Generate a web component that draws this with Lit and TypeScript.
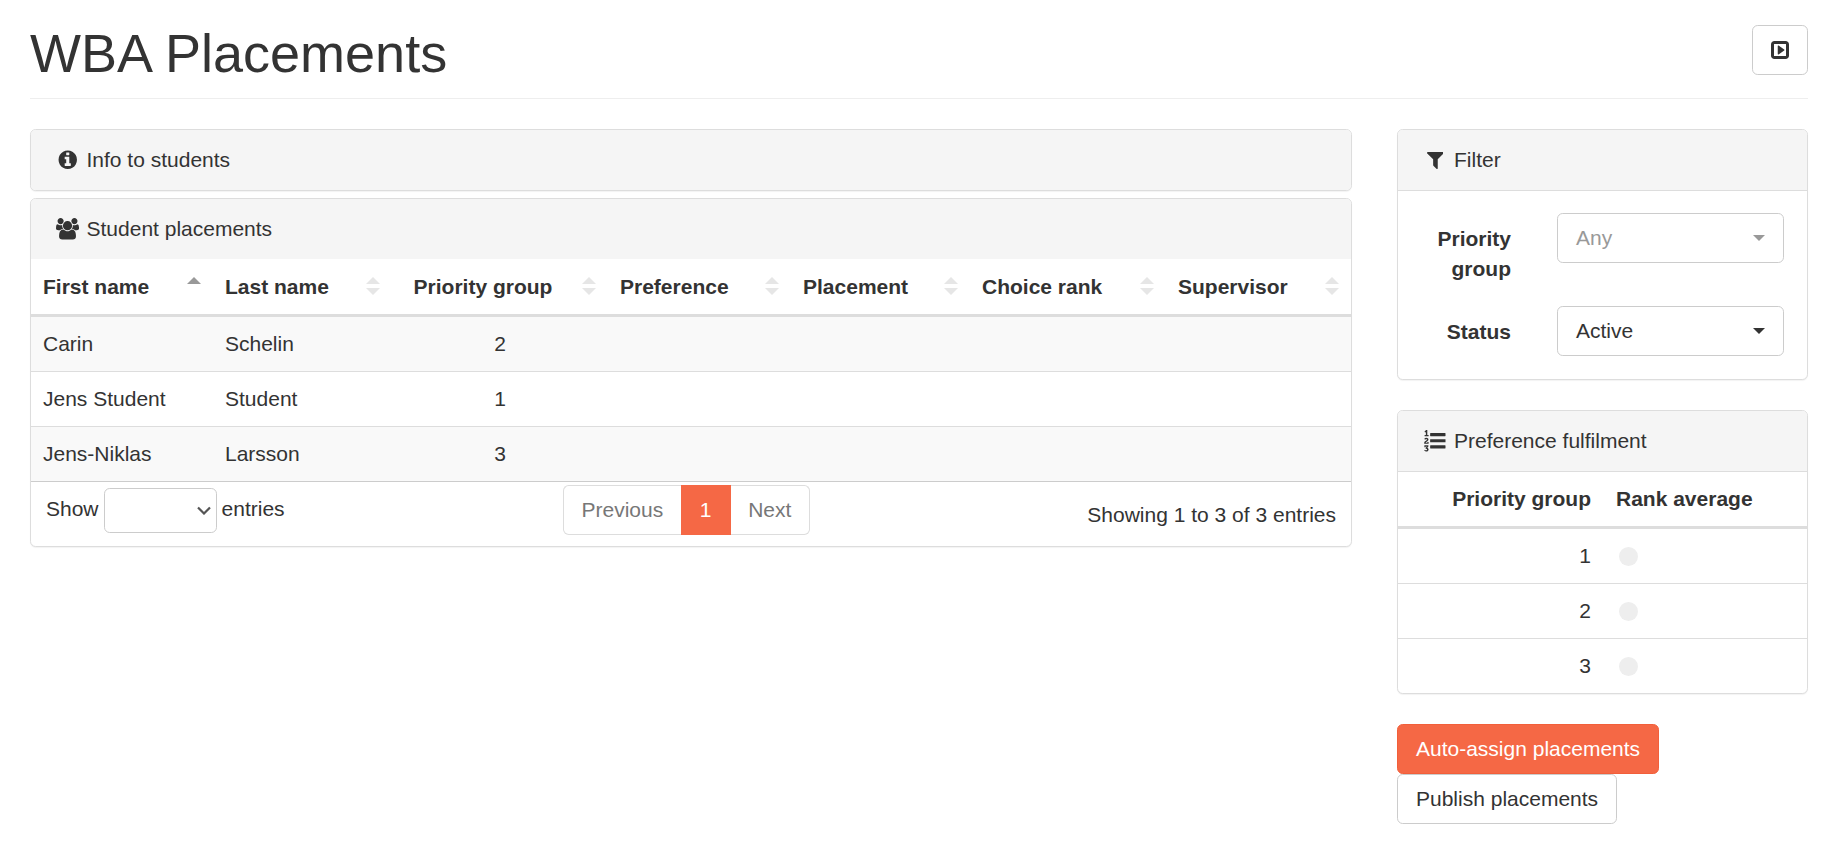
import { LitElement, html, css, TemplateResult } from 'lit';
import { customElement } from 'lit/decorators.js';

/** Font Awesome 4 style glyphs, as [viewBox, path]. */
const ICONS: Record<string, [string, string]> = {
  info: [
    '0 0 1792 1792',
    'M1152 1376v-160q0-14-9-23t-23-9h-96v-512q0-14-9-23t-23-9h-320q-14 0-23 9t-9 23v160q0 14 9 23t23 9h96v320h-96q-14 0-23 9t-9 23v160q0 14 9 23t23 9h448q14 0 23-9t9-23zm-128-896v-160q0-14-9-23t-23-9h-192q-14 0-23 9t-9 23v160q0 14 9 23t23 9h192q14 0 23-9t9-23zm640 416q0 209-103 385.5t-279.5 279.5-385.5 103-385.5-103-279.5-279.5-103-385.5 103-385.5 279.5-279.5 385.5-103 385.5 103 279.5 279.5 103 385.5z',
  ],
  users: [
    '0 0 1920 1792',
    'M593 896q-162 5-265 128h-134q-82 0-138-40.5t-56-118.5q0-353 124-353 6 0 43.5 21t97.5 42.5 119 21.5q67 0 133-23-5 37-5 66 0 139 81 256zm1071 637q0 120-73 189.5t-194 69.5h-874q-121 0-194-69.5t-73-189.5q0-53 3.5-103.5t14-109 26.5-108.5 43-97.5 62-81 85.5-53.5 111.5-20q10 0 43 21.5t73 48 107 48 135 21.5 135-21.5 107-48 73-48 43-21.5q61 0 111.5 20t85.5 53.5 62 81 43 97.5 26.5 108.5 14 109 3.5 103.5zm-1024-1277q0 106-75 181t-181 75-181-75-75-181 75-181 181-75 181 75 75 181zm704 384q0 159-112.5 271.5t-271.5 112.5-271.5-112.5-112.5-271.5 112.5-271.5 271.5-112.5 271.5 112.5 112.5 271.5zm576 225q0 78-56 118.5t-138 40.5h-134q-103-123-265-128 81-117 81-256 0-29-5-66 66 23 133 23 59 0 119-21.5t97.5-42.5 43.5-21q124 0 124 353zm-128-609q0 106-75 181t-181 75-181-75-75-181 75-181 181-75 181 75 75 181z',
  ],
  filter: [
    '192 0 1408 1792',
    'M1595 295q17 41-14 70l-493 493v742q0 42-39 59-13 5-25 5-27 0-45-19l-256-256q-19-19-19-45v-486l-493-493q-31-29-14-70 17-39 59-39h1280q42 0 59 39z',
  ],
  listOl: [
    '0 0 1792 1792',
    'M381 1620q0 80-54.5 126t-135.5 46q-106 0-172-66l57-88q49 45 106 45 29 0 50.5-14.5t21.5-42.5q0-64-105-56l-26-56q8-10 32.5-43.5t42.5-54 37-38.5v-1q-16 0-48.5 1t-48.5 1v53h-106v-152h333v88l-95 115q51 12 81 49t30 88zm2-627v159h-362q-6-36-6-54 0-51 23.5-93t56.5-68 66-47.5 56.5-43.5 23.5-45q0-25-14.5-38.5t-39.5-13.5q-46 0-81 58l-85-59q24-51 71.5-79.5t105.5-28.5q73 0 123 41.5t50 112.5q0 50-34 91.5t-75 64.5-75.5 50.5-35.5 52.5h127v-60h105zm1409 319v192q0 13-9.5 22.5t-22.5 9.5h-1216q-13 0-22.5-9.5t-9.5-22.5v-192q0-14 9-23t23-9h1216q13 0 22.5 9.5t9.5 22.5zm-1408-899v99h-335v-99h107q0-41 .5-122t.5-121v-12h-2q-8 17-50 54l-71-76 136-127h106v404h108zm1408 387v192q0 13-9.5 22.5t-22.5 9.5h-1216q-13 0-22.5-9.5t-9.5-22.5v-192q0-14 9-23t23-9h1216q13 0 22.5 9.5t9.5 22.5zm0-512v192q0 13-9.5 22.5t-22.5 9.5h-1216q-13 0-22.5-9.5t-9.5-22.5v-192q0-13 9.5-22.5t22.5-9.5h1216q13 0 22.5 9.5t9.5 22.5z',
  ],
  play: [
    '0 128 1536 1536',
    'M1152 896q0 33-27 52l-448 320q-31 23-66 5-35-17-35-57v-640q0-39 35-57 35-17 66 5l448 320q27 19 27 52zm128 480v-960q0-13-9.5-22.5t-22.5-9.5h-960q-13 0-22.5 9.5t-9.5 22.5v960q0 13 9.5 22.5t22.5 9.5h960q13 0 22.5-9.5t9.5-22.5zm256-960v960q0 119-84.5 203.5t-203.5 84.5h-960q-119 0-203.5-84.5t-84.5-203.5v-960q0-119 84.5-203.5t203.5-84.5h960q119 0 203.5 84.5t84.5 203.5z',
  ],
};

const COLUMNS = [
  'First name',
  'Last name',
  'Priority group',
  'Preference',
  'Placement',
  'Choice rank',
  'Supervisor',
];

const STUDENTS = [
  { first: 'Carin', last: 'Schelin', group: 2 },
  { first: 'Jens Student', last: 'Student', group: 1 },
  { first: 'Jens-Niklas', last: 'Larsson', group: 3 },
];

const icon = (name: string): TemplateResult => {
  const [box, d] = ICONS[name];
  return html`<svg class="icon" viewBox="${box}" aria-hidden="true"><path d="${d}"></path></svg>`;
};

@customElement('app-root')
export class AppRoot extends LitElement {
  static styles = css`
    :host {
      display: block;
      box-sizing: border-box;
      padding: 0 19px 0 30px;
      font-family: 'Liberation Sans', Arial, sans-serif;
      font-size: 21px;
      line-height: 28px;
      color: #333;
      background: #fff;
    }

    * {
      box-sizing: border-box;
    }

    .page-header {
      display: flex;
      justify-content: space-between;
      align-items: flex-start;
      height: 99px;
      padding-top: 25px;
      margin-bottom: 30px;
      border-bottom: 1px solid #eee;
    }

    h1 {
      margin: 0;
      font-size: 54px;
      font-weight: 400;
      line-height: 56px;
    }

    .icon {
      display: block;
      height: 21.5px;
      fill: currentColor;
    }

    .btn {
      display: inline-flex;
      align-items: center;
      height: 50px;
      padding: 0 18px;
      border: 1px solid #ccc;
      border-radius: 5.7px;
      background: #fff;
      font: inherit;
      color: #333;
    }

    .btn-square {
      justify-content: center;
      width: 56px;
    }

    .btn-square .icon {
      height: 18px;
    }

    .btn-primary {
      background: #f56845;
      border-color: #f25f3a;
      color: #fff;
    }

    .columns {
      display: grid;
      grid-template-columns: 1322px 411px;
      column-gap: 45px;
      align-items: start;
    }

    .panel {
      border: 1px solid #ddd;
      border-radius: 5.7px;
      background: #fff;
      box-shadow: 0 1px 1px rgba(0, 0, 0, 0.05);
      overflow: hidden;
    }

    .left .panel + .panel {
      margin-top: 7px;
    }

    .panel-heading {
      display: flex;
      align-items: center;
      height: 60px;
      padding-left: 23.5px;
      background: #f5f5f5;
    }

    .panel-heading.ruled {
      height: 61px;
      border-bottom: 1px solid #ddd;
    }

    .heading-icon {
      display: flex;
      justify-content: center;
      width: 26px;
      margin-right: 6px;
    }

    .right .panel-heading {
      padding-left: 24px;
    }

    .right .panel + .panel {
      margin-top: 30px;
    }

    table {
      width: 100%;
      border-spacing: 0;
      table-layout: fixed;
    }

    th {
      height: 58px;
      padding: 0 12px;
      border-bottom: 3px solid #ddd;
      font-weight: 700;
      text-align: left;
    }

    td {
      height: 55px;
      padding: 0 12px;
      border-bottom: 1px solid #ddd;
    }

    .students col:nth-child(1) { width: 182px; }
    .students col:nth-child(2) { width: 179px; }
    .students col:nth-child(3) { width: 216px; }
    .students col:nth-child(4) { width: 183px; }
    .students col:nth-child(5) { width: 179px; }
    .students col:nth-child(6) { width: 196px; }

    .students th {
      position: relative;
      padding-right: 43px;
    }

    .students .center {
      text-align: center;
    }

    .students th.center {
      padding-right: 46px;
    }

    .students tbody tr:nth-child(odd) {
      background: #f9f9f9;
    }

    .students tbody tr:last-child td {
      border-bottom-color: #ccc;
    }

    .sort {
      position: absolute;
      top: 18px;
      right: 12px;
      width: 14px;
      height: 18px;
    }

    .sort::before,
    .sort::after {
      content: '';
      position: absolute;
      left: 0;
      border-left: 7px solid transparent;
      border-right: 7px solid transparent;
    }

    .sort::before {
      top: 0;
      border-bottom: 7px solid #e6e6e6;
    }

    .sort::after {
      bottom: 0;
      border-top: 7px solid #e6e6e6;
    }

    .sort.asc::before {
      border-bottom-color: #999;
    }

    .sort.asc::after {
      display: none;
    }

    .table-footer {
      display: grid;
      grid-template-columns: 532px auto 1fr;
      height: 64px;
    }

    .length {
      display: flex;
      align-items: flex-start;
      gap: 5px;
      margin-top: 6px;
      padding-left: 15px;
    }

    .length-label {
      padding-top: 7px;
    }

    .length-select {
      position: relative;
      height: 45px;
    }

    .length-select select {
      appearance: none;
      display: block;
      width: 113px;
      height: 45px;
      border: 1px solid #ccc;
      border-radius: 5.7px;
      background: #fff;
      font: inherit;
    }

    .chevron {
      position: absolute;
      top: 18px;
      right: 6px;
      width: 14px;
      height: 9px;
      fill: none;
      stroke: #555;
      stroke-width: 2.2;
      pointer-events: none;
    }

    .pagination {
      display: flex;
      height: 50px;
      margin-top: 3px;
    }

    .page {
      display: flex;
      align-items: center;
      padding: 0 17.5px;
      border: 1px solid #ddd;
      color: #777;
    }

    .page:first-child {
      border-right: 0;
      border-radius: 5.7px 0 0 5.7px;
    }

    .page:last-child {
      border-left: 0;
      border-radius: 0 5.7px 5.7px 0;
    }

    .page.current {
      width: 50px;
      justify-content: center;
      background: #f56845;
      border-color: #f56845;
      color: #fff;
    }

    .info {
      margin-top: 19px;
      padding-right: 15px;
      text-align: right;
    }

    .filter-form {
      display: grid;
      grid-template-columns: 113px 1fr;
      column-gap: 46px;
      padding: 22px 23px 23px 0;
    }

    .filter-form label {
      padding-top: 11px;
      font-weight: 700;
      line-height: 30px;
      text-align: right;
    }

    .filter-form .field {
      margin-bottom: 43px;
    }

    .filter-form .field:last-child {
      margin-bottom: 0;
    }

    .combo {
      display: flex;
      align-items: center;
      justify-content: space-between;
      height: 50px;
      padding: 0 18px;
      border: 1px solid #ccc;
      border-radius: 5.7px;
      background: #fff;
    }

    .combo::after {
      content: '';
      border-left: 6px solid transparent;
      border-right: 6px solid transparent;
      border-top: 6px solid currentColor;
    }

    .combo.placeholder {
      color: #999;
    }

    .fulfilment col:first-child {
      width: 208px;
    }

    .fulfilment th {
      height: 57px;
    }

    .fulfilment th:first-child,
    .fulfilment td:first-child {
      text-align: right;
      padding-right: 15px;
    }

    .fulfilment th:last-child {
      padding-left: 10px;
      padding-right: 0;
    }

    .fulfilment td:last-child {
      padding-left: 13px;
    }

    .fulfilment tr:last-child td {
      height: 54px;
      border-bottom: 0;
    }

    .dot {
      width: 19px;
      height: 19px;
      border-radius: 50%;
      background: #eee;
    }

    .actions {
      display: flex;
      flex-direction: column;
      align-items: flex-start;
      margin-top: 30px;
    }
  `;

  private renderStudents() {
    return html`
      <section class="panel">
        <div class="panel-heading">
          <span class="heading-icon">${icon('users')}</span>Student placements
        </div>
        <table class="students">
          <colgroup>${COLUMNS.map(() => html`<col />`)}</colgroup>
          <thead>
            <tr>
              ${COLUMNS.map(
                (name, i) => html`
                  <th class="${i === 2 ? 'center' : ''}">
                    ${name}<span class="sort ${i === 0 ? 'asc' : ''}"></span>
                  </th>
                `,
              )}
            </tr>
          </thead>
          <tbody>
            ${STUDENTS.map(
              (s) => html`
                <tr>
                  <td>${s.first}</td>
                  <td>${s.last}</td>
                  <td class="center">${s.group}</td>
                  <td></td>
                  <td></td>
                  <td></td>
                  <td></td>
                </tr>
              `,
            )}
          </tbody>
        </table>
        <div class="table-footer">
          <div class="length">
            <span class="length-label">Show</span>
            <span class="length-select">
              <select aria-label="Entries per page"><option></option></select>
              <svg class="chevron" viewBox="0 0 14 9"><path d="M1 1.5l6 6 6-6"></path></svg>
            </span>
            <span class="length-label">entries</span>
          </div>
          <div class="pagination">
            <span class="page">Previous</span>
            <span class="page current">1</span>
            <span class="page">Next</span>
          </div>
          <div class="info">Showing 1 to 3 of 3 entries</div>
        </div>
      </section>
    `;
  }

  private renderFilter() {
    return html`
      <section class="panel">
        <div class="panel-heading ruled">
          <span class="heading-icon">${icon('filter')}</span>Filter
        </div>
        <div class="filter-form">
          <label>Priority group</label>
          <div class="field"><div class="combo placeholder">Any</div></div>
          <label>Status</label>
          <div class="field"><div class="combo">Active</div></div>
        </div>
      </section>
    `;
  }

  private renderFulfilment() {
    return html`
      <section class="panel">
        <div class="panel-heading ruled">
          <span class="heading-icon">${icon('listOl')}</span>Preference fulfilment
        </div>
        <table class="fulfilment">
          <colgroup><col /><col /></colgroup>
          <thead>
            <tr>
              <th>Priority group</th>
              <th>Rank average</th>
            </tr>
          </thead>
          <tbody>
            ${[1, 2, 3].map(
              (group) => html`
                <tr>
                  <td>${group}</td>
                  <td><div class="dot"></div></td>
                </tr>
              `,
            )}
          </tbody>
        </table>
      </section>
    `;
  }

  render() {
    return html`
      <header class="page-header">
        <h1>WBA Placements</h1>
        <button class="btn btn-square" type="button" aria-label="Start">${icon('play')}</button>
      </header>
      <div class="columns">
        <div class="left">
          <section class="panel">
            <div class="panel-heading">
              <span class="heading-icon">${icon('info')}</span>Info to students
            </div>
          </section>
          ${this.renderStudents()}
        </div>
        <div class="right">
          ${this.renderFilter()} ${this.renderFulfilment()}
          <div class="actions">
            <button class="btn btn-primary" type="button">Auto-assign placements</button>
            <button class="btn" type="button">Publish placements</button>
          </div>
        </div>
      </div>
    `;
  }
}

declare global {
  interface HTMLElementTagNameMap {
    'app-root': AppRoot;
  }
}
